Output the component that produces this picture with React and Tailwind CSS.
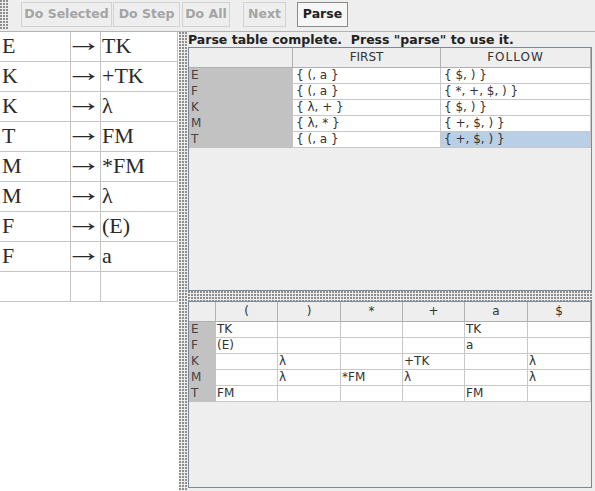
import React from "react";

const dots =
  "bg-[#eeeeee] bg-[radial-gradient(circle_at_1px_1px,#8e8e8e_0.75px,transparent_0.95px)] bg-[length:3px_3px]";

const grammar = [
  ["E", "TK"],
  ["K", "+TK"],
  ["K", "λ"],
  ["T", "FM"],
  ["M", "*FM"],
  ["M", "λ"],
  ["F", "(E)"],
  ["F", "a"],
  ["", ""],
];

const firstFollow = [
  ["E", "{ (, a }", "{ $, ) }"],
  ["F", "{ (, a }", "{ *, +, $, ) }"],
  ["K", "{ λ, + }", "{ $, ) }"],
  ["M", "{ λ, * }", "{ +, $, ) }"],
  ["T", "{ (, a }", "{ +, $, ) }"],
];

const parseHead = ["(", ")", "*", "+", "a", "$"];
const parseRows = [
  ["E", "TK", "", "", "", "TK", ""],
  ["F", "(E)", "", "", "", "a", ""],
  ["K", "", "λ", "", "+TK", "", "λ"],
  ["M", "", "λ", "*FM", "λ", "", "λ"],
  ["T", "FM", "", "", "", "FM", ""],
];

function Btn({ label, w, ml, enabled }) {
  return (
    <div
      className={
        "h-[25px] flex items-center justify-center text-[12.5px] font-bold border " +
        (enabled
          ? "bg-[#f6f6f6] border-[#8a8a8a] text-[#222222]"
          : "bg-[#eeeeee] border-[#d2d2d2] text-[#a4a4a4]")
      }
      style={{ width: w, marginLeft: ml }}
    >
      {label}
    </div>
  );
}

export default function App() {
  return (
    <div className="w-[595px] h-[491px] bg-[#eeeeee] flex flex-col overflow-hidden font-['DejaVu_Sans',sans-serif] text-[#333333]">
      {/* toolbar */}
      <div className="h-[32px] shrink-0 flex items-start border-b border-[#b4b4b4]">
        <div className={"w-[8px] h-[30px] " + dots} />
        <div className="flex pt-[2px]">
          <Btn label="Do Selected" w={91} ml={13} />
          <Btn label="Do Step" w={67} ml={1} />
          <Btn label="Do All" w={48} ml={2} />
          <Btn label="Next" w={43} ml={13} />
          <Btn label="Parse" w={51} ml={11} enabled />
        </div>
      </div>

      <div className="flex flex-1 min-h-0">
        {/* left grammar table */}
        <div className="w-[179px] shrink-0 bg-white font-['Liberation_Serif',serif] text-[22px] text-[#2a2a2a]">
          <div className="grid grid-cols-[71px_30px_77px]">
            {grammar.map(([l, r], i) => (
              <React.Fragment key={i}>
                <div className="h-[30px] leading-[28px] pl-[2px] border-r border-b border-[#c4c4c4]">
                  {l}
                </div>
                <div className="h-[30px] leading-[28px] border-r border-b border-[#c4c4c4]">
                  {l ? (
                    <span className="inline-block -ml-[6px] origin-left scale-x-[1.69] scale-y-[1.2] -translate-y-[3px]">
                      →
                    </span>
                  ) : (
                    ""
                  )}
                </div>
                <div className="h-[30px] leading-[28px] pl-[1px] border-r border-b border-[#c4c4c4]">
                  {r}
                </div>
              </React.Fragment>
            ))}
          </div>
        </div>

        {/* vertical divider */}
        <div className={"w-[9px] shrink-0 " + dots} />

        {/* right side */}
        <div className="flex-1 flex flex-col min-w-0">
          <div className="h-[15px] leading-[15px] text-[12.5px] font-bold text-[#222222] whitespace-pre">
            {'Parse table complete.  Press "parse" to use it.'}
          </div>

          {/* first / follow pane */}
          <div className="w-[404px] h-[244px] shrink-0 border border-[#7a8a99] bg-[#eeeeee] text-[12px]">
            <div className="grid grid-cols-[104px_148px_150px]">
              <div className="h-[20px] bg-[#eeeeee] border-r border-b border-[#b0b0b0]" />
              <div className="h-[20px] leading-[19px] text-center bg-[#eeeeee] border-r border-b border-[#b0b0b0]">
                FIRST
              </div>
              <div className="h-[20px] leading-[19px] text-center bg-[#eeeeee] border-r border-b border-[#b0b0b0] tracking-[1px]">
                FOLLOW
              </div>
              {firstFollow.map(([n, f, w], i) => (
                <React.Fragment key={i}>
                  <div className="h-[16px] leading-[15px] pl-[2px] bg-[#c2c2c2] border-b border-r border-[#c2c2c2] text-[#444444]">
                    {n}
                  </div>
                  <div className="h-[16px] leading-[15px] pl-[3px] bg-white border-b border-r border-[#c8c8c8] whitespace-pre">
                    {f}
                  </div>
                  <div
                    className={
                      "h-[16px] leading-[15px] pl-[3px] border-b border-r border-[#c8c8c8] whitespace-pre " +
                      (i === 4 ? "bg-[#b8cfe5]" : "bg-white")
                    }
                  >
                    {w}
                  </div>
                </React.Fragment>
              ))}
            </div>
          </div>

          {/* horizontal divider */}
          <div className={"h-[10px] w-[404px] shrink-0 " + dots} />

          {/* parse table pane */}
          <div className="w-[404px] h-[187px] shrink-0 border border-[#7a8a99] bg-[#eeeeee] text-[12px]">
            <div className="grid grid-cols-[27px_62px_63px_62px_62px_63px_63px]">
              <div className="h-[20px] bg-[#eeeeee] border-r border-b border-[#b0b0b0]" />
              {parseHead.map((h) => (
                <div
                  key={h}
                  className="h-[20px] leading-[19px] text-center bg-[#eeeeee] border-r border-b border-[#b0b0b0]"
                >
                  {h}
                </div>
              ))}
              {parseRows.map((row, i) => (
                <React.Fragment key={i}>
                  {row.map((c, j) =>
                    j === 0 ? (
                      <div
                        key={j}
                        className="h-[16px] leading-[15px] pl-[2px] bg-[#c2c2c2] border-b border-r border-[#c2c2c2] text-[#444444]"
                      >
                        {c}
                      </div>
                    ) : (
                      <div
                        key={j}
                        className="h-[16px] leading-[15px] pl-[1px] bg-white border-b border-r border-[#c8c8c8] whitespace-pre"
                      >
                        {c}
                      </div>
                    )
                  )}
                </React.Fragment>
              ))}
            </div>
          </div>
        </div>
      </div>
    </div>
  );
}
